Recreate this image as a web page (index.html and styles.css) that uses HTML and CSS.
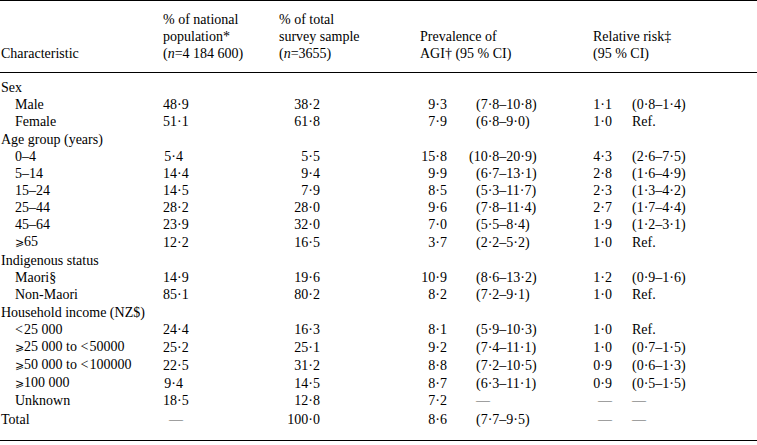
FILE: index.html
```html
<!DOCTYPE html>
<html>
<head>
<meta charset="utf-8">
<link rel="stylesheet" href="styles.css">
</head>
<body>
<table class="tbl">
  <colgroup>
    <col class="c1"><col class="c2"><col class="c3"><col class="c4"><col class="c5"><col class="c6"><col class="c7">
  </colgroup>
  <thead>
    <tr>
      <th class="h">Characteristic</th>
      <th class="h">% of national<br>population*<br>(<i>n</i>=4 184 600)</th>
      <th class="h">% of total<br>survey sample<br>(<i>n</i>=3655)</th>
      <th class="h" colspan="2">Prevalence of<br>AGI† (95 % CI)</th>
      <th class="h" colspan="2">Relative risk‡<br>(95 % CI)</th>
    </tr>
  </thead>
  <tbody>
    <tr class="grp first"><td>Sex</td><td></td><td></td><td></td><td></td><td></td><td></td></tr>
    <tr><td class="sub">Male</td><td class="n2">48·9</td><td class="n3">38·2</td><td class="n4">9·3</td><td class="ci">(7·8–10·8)</td><td class="n6">1·1</td><td class="ci2">(0·8–1·4)</td></tr>
    <tr><td class="sub">Female</td><td class="n2">51·1</td><td class="n3">61·8</td><td class="n4">7·9</td><td class="ci">(6·8–9·0)</td><td class="n6">1·0</td><td class="ci2 ref">Ref.</td></tr>
    <tr class="grp"><td>Age group (years)</td><td></td><td></td><td></td><td></td><td></td><td></td></tr>
    <tr><td class="sub">0–4</td><td class="n2">5·4</td><td class="n3">5·5</td><td class="n4">15·8</td><td class="ci hang">(10·8–20·9)</td><td class="n6">4·3</td><td class="ci2">(2·6–7·5)</td></tr>
    <tr><td class="sub">5–14</td><td class="n2">14·4</td><td class="n3">9·4</td><td class="n4">9·9</td><td class="ci">(6·7–13·1)</td><td class="n6">2·8</td><td class="ci2">(1·6–4·9)</td></tr>
    <tr><td class="sub">15–24</td><td class="n2">14·5</td><td class="n3">7·9</td><td class="n4">8·5</td><td class="ci">(5·3–11·7)</td><td class="n6">2·3</td><td class="ci2">(1·3–4·2)</td></tr>
    <tr><td class="sub">25–44</td><td class="n2">28·2</td><td class="n3">28·0</td><td class="n4">9·6</td><td class="ci">(7·8–11·4)</td><td class="n6">2·7</td><td class="ci2">(1·7–4·4)</td></tr>
    <tr><td class="sub">45–64</td><td class="n2">23·9</td><td class="n3">32·0</td><td class="n4">7·0</td><td class="ci">(5·5–8·4)</td><td class="n6">1·9</td><td class="ci2">(1·2–3·1)</td></tr>
    <tr><td class="sub"><span class="ge">⩾</span>65</td><td class="n2">12·2</td><td class="n3">16·5</td><td class="n4">3·7</td><td class="ci">(2·2–5·2)</td><td class="n6">1·0</td><td class="ci2 ref">Ref.</td></tr>
    <tr class="grp"><td>Indigenous status</td><td></td><td></td><td></td><td></td><td></td><td></td></tr>
    <tr><td class="sub">Maori§</td><td class="n2">14·9</td><td class="n3">19·6</td><td class="n4">10·9</td><td class="ci">(8·6–13·2)</td><td class="n6">1·2</td><td class="ci2">(0·9–1·6)</td></tr>
    <tr><td class="sub">Non-Maori</td><td class="n2">85·1</td><td class="n3">80·2</td><td class="n4">8·2</td><td class="ci">(7·2–9·1)</td><td class="n6">1·0</td><td class="ci2 ref">Ref.</td></tr>
    <tr class="grp"><td>Household income (NZ$)</td><td></td><td></td><td></td><td></td><td></td><td></td></tr>
    <tr><td class="sub">&lt;&#8202;25 000</td><td class="n2">24·4</td><td class="n3">16·3</td><td class="n4">8·1</td><td class="ci">(5·9–10·3)</td><td class="n6">1·0</td><td class="ci2 ref">Ref.</td></tr>
    <tr><td class="sub"><span class="ge">⩾</span>25 000 to &lt;&#8202;50000</td><td class="n2">25·2</td><td class="n3">25·1</td><td class="n4">9·2</td><td class="ci">(7·4–11·1)</td><td class="n6">1·0</td><td class="ci2">(0·7–1·5)</td></tr>
    <tr><td class="sub"><span class="ge">⩾</span>50 000 to &lt;&#8202;100000</td><td class="n2">22·5</td><td class="n3">31·2</td><td class="n4">8·8</td><td class="ci">(7·2–10·5)</td><td class="n6">0·9</td><td class="ci2">(0·6–1·3)</td></tr>
    <tr><td class="sub"><span class="ge">⩾</span>100 000</td><td class="n2">9·4</td><td class="n3">14·5</td><td class="n4">8·7</td><td class="ci">(6·3–11·1)</td><td class="n6">0·9</td><td class="ci2">(0·5–1·5)</td></tr>
    <tr><td class="sub">Unknown</td><td class="n2">18·5</td><td class="n3">12·8</td><td class="n4">7·2</td><td class="ci"><span class="dash">—</span></td><td class="n6"><span class="dash">—</span></td><td class="ci2"><span class="dash">—</span></td></tr>
    <tr class="total"><td>Total</td><td class="n2"><span class="dash">—</span></td><td class="n3">100·0</td><td class="n4">8·6</td><td class="ci">(7·7–9·5)</td><td class="n6"><span class="dash">—</span></td><td class="ci2"><span class="dash">—</span></td></tr>
  </tbody>
</table>
</body>
</html>
```

FILE: styles.css
```css
html, body {
  margin: 0;
  padding: 0;
  background: #fff;
}
body {
  font-family: "Liberation Serif", "Times New Roman", serif;
  font-size: 14px;
  color: #000;
}
.tbl {
  width: 757px;
  border-collapse: collapse;
  table-layout: fixed;
  border-top: 1px solid #000;
  border-bottom: 1.5px solid #000;
}
.c1 { width: 163px; }
.c2 { width: 116px; }
.c3 { width: 141px; }
.c4 { width: 35px; }
.c5 { width: 138px; }
.c6 { width: 27px; }
.c7 { width: 137px; }
th, td {
  padding: 0;
  white-space: nowrap;
  line-height: 17px;
}
.h {
  font-weight: normal;
  text-align: left;
  vertical-align: bottom;
  padding-top: 10px;
  padding-bottom: 10px;
  border-bottom: 1px solid #000;
}
thead th:first-child { padding-left: 1px; }
tr.first td { padding-top: 6px; }
.grp td { padding-left: 1px; }
tr.grp:not(.first) td { padding-top: 1px; }
.sub { padding-left: 15px; }
.n2 { text-align: right; padding-right: 96px; }
.n3 { text-align: right; padding-right: 100px; }
.n4 { text-align: right; padding-right: 8px; }
.ci { text-align: left; padding-left: 21px; }
.ci.hang { padding-left: 14px; }
.n6 { text-align: right; padding-right: 8px; }
.ci2 { text-align: left; padding-left: 12px; }
.total td { padding-top: 2px; padding-bottom: 12px; }
.total td:first-child { padding-left: 1px; }
.ge { font-family: "DejaVu Serif", serif; font-size: 11px; }
.dash { color: #555; }
```
